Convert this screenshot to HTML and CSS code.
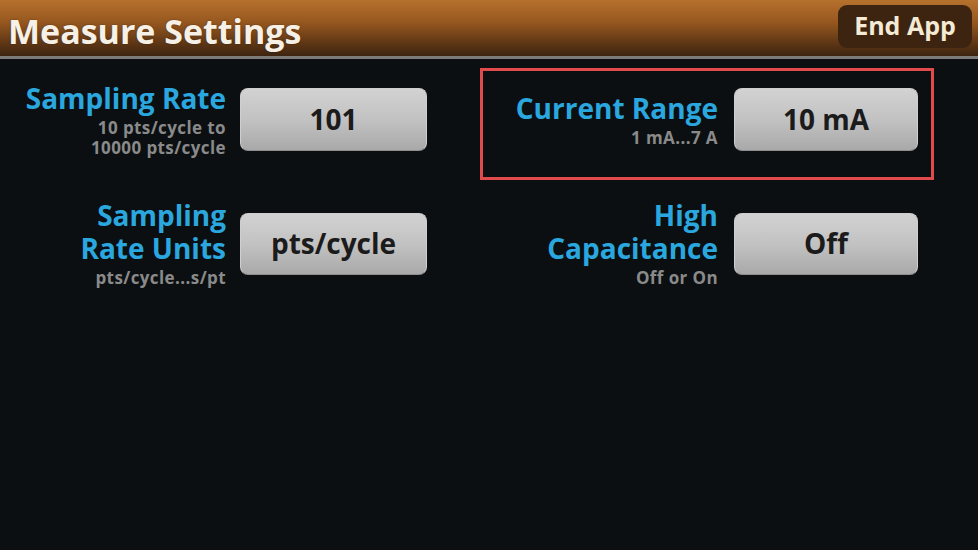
FILE: index.html
```html
<!DOCTYPE html>
<html>
<head>
<meta charset="utf-8">
<link rel="stylesheet" href="styles.css">
</head>
<body>
<header class="topbar">
  <h1 class="title">Measure Settings</h1>
  <button class="end-app">End App</button>
</header>
<main class="grid">
  <div class="setting setting-left">
    <div class="label">
      <div class="label-title">Sampling Rate</div>
      <div class="label-sub">10 pts/cycle to</div>
      <div class="label-sub">10000 pts/cycle</div>
    </div>
    <button class="value">101</button>
  </div>
  <div class="setting setting-right selected">
    <div class="label">
      <div class="label-title">Current Range</div>
      <div class="label-sub">1 mA...7 A</div>
    </div>
    <button class="value">10 mA</button>
  </div>
  <div class="setting setting-left">
    <div class="label">
      <div class="label-title">Sampling</div>
      <div class="label-title">Rate Units</div>
      <div class="label-sub">pts/cycle...s/pt</div>
    </div>
    <button class="value">pts/cycle</button>
  </div>
  <div class="setting setting-right">
    <div class="label">
      <div class="label-title">High</div>
      <div class="label-title">Capacitance</div>
      <div class="label-sub">Off or On</div>
    </div>
    <button class="value">Off</button>
  </div>
</main>
</body>
</html>
```
FILE: styles.css
```css
html, body {
  margin: 0;
  padding: 0;
}
body {
  width: 978px;
  height: 550px;
  overflow: hidden;
  background: #0b0f11;
  font-family: "Open Sans", "DejaVu Sans", sans-serif;
  font-weight: 700;
}
.topbar {
  height: 56px;
  border-bottom: 3px solid #7d7b78;
  background: linear-gradient(to bottom, #b6712d 0%, #96571f 40%, #5a3414 80%, #3e240f 100%);
  display: flex;
  align-items: center;
  justify-content: space-between;
  padding: 0 6px 0 8px;
}
.title {
  margin: 6px 0 0 0;
  font-size: 34px;
  font-weight: 700;
  color: #f6f0e6;
  letter-spacing: 0;
  text-shadow: 0 0 2px rgba(0,0,0,0.4);
}
.end-app {
  align-self: flex-start;
  margin-top: 5px;
  width: 134px;
  height: 43px;
  border: none;
  border-radius: 9px;
  background: #3c2410;
  color: #f5ead4;
  font-family: inherit;
  font-weight: 700;
  font-size: 25px;
  padding: 0 0 3px 0;
}
.grid {
  display: grid;
  grid-template-columns: 480px 454px;
  row-gap: 12px;
  padding-top: 9px;
}
.setting {
  display: flex;
  align-items: center;
  height: 63px;
  padding: 17px 13px 26px 0;
  border: 3px solid transparent;
}
.setting.selected {
  border-color: #e24b4b;
}
.label {
  text-align: right;
  flex: none;
}
.setting-left .label {
  width: 223px;
  margin-right: 14px;
}
.setting-right .label {
  width: 235px;
  margin-right: 16px;
}
.label-title {
  color: #2aa7df;
  font-size: 28px;
  line-height: 33px;
  letter-spacing: 0;
}
.label-title + .label-sub {
  margin-top: 3px;
}
.label-sub {
  color: #8a8a8a;
  font-size: 17px;
  line-height: 20px;
  letter-spacing: 0.4px;
}
.value {
  flex: none;
  height: 63px;
  border: 1px solid #cfcfcf;
  border-bottom-color: #8f8f8f;
  border-radius: 8px;
  background: linear-gradient(to bottom, #d2d2d2 0%, #c2c2c2 50%, #a9a9a9 100%);
  color: #1b1b1b;
  font-family: inherit;
  font-weight: 700;
  font-size: 28px;
  padding: 0 0 2px 0;
}
.setting-left .value {
  width: 187px;
}
.setting-right .value {
  width: 184px;
}
.setting:nth-child(n+3) .value {
  height: 62px;
}
```
